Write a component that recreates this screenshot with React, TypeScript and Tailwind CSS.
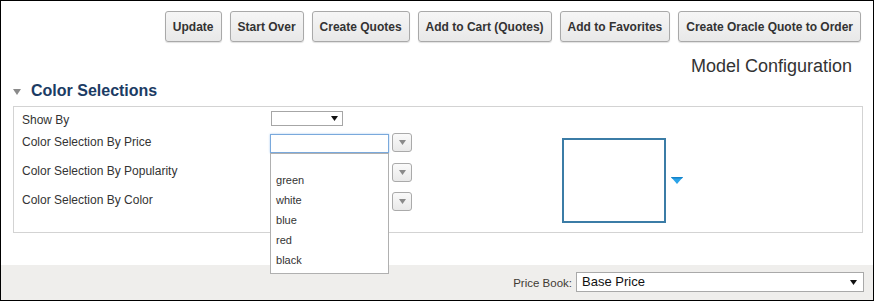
import React from 'react';

function Caret({ className }: { className?: string }) {
  return (
    <svg width="7" height="5" viewBox="0 0 7 5" className={className}>
      <path d="M0 0h7L3.5 5z" fill="currentColor" />
    </svg>
  );
}

function ToolButton({ label }: { label: string }) {
  return (
    <button className="h-[31px] px-[7px] rounded-[3px] border border-[#a9a9a9] bg-gradient-to-b from-[#f6f6f6] to-[#e8e8e8] text-[12px] font-bold text-[#333] shadow-[0_1px_1px_rgba(0,0,0,0.12)] whitespace-nowrap">
      {label}
    </button>
  );
}

function PickButton() {
  return (
    <div className="w-[20px] h-[19px] ml-[3px] mt-[1px] rounded-[3px] border border-[#aaa] bg-gradient-to-b from-[#fafafa] to-[#e9e9e9] flex items-center justify-center">
      <Caret className="text-[#8a8a8a]" />
    </div>
  );
}

const colors = ['green', 'white', 'blue', 'red', 'black'];

export default function App() {
  return (
    <div className="w-[874px] h-[301px] border border-black bg-white flex flex-col overflow-hidden font-['Liberation_Sans',Arial,sans-serif] text-[#333]">
      {/* toolbar */}
      <div className="flex justify-end gap-[8px] pt-[10px] pr-[12px]">
        <ToolButton label="Update" />
        <ToolButton label="Start Over" />
        <ToolButton label="Create Quotes" />
        <ToolButton label="Add to Cart (Quotes)" />
        <ToolButton label="Add to Favorites" />
        <ToolButton label="Create Oracle Quote to Order" />
      </div>

      <div className="mt-[14px] pr-[21px] text-right text-[18px] leading-[20px] text-[#333]">Model Configuration</div>

      {/* section header */}
      <div className="mt-[5px] pl-[12px] flex items-center h-[20px]">
        <svg width="8" height="6" viewBox="0 0 8 6" className="mt-[2px]">
          <path d="M0 0h8L4 6z" fill="#8a8a8a" />
        </svg>
        <span className="ml-[10px] text-[16px] font-bold text-[#1b3b64]">Color Selections</span>
      </div>

      {/* panel */}
      <div className="mt-[5px] ml-[12px] mr-[10px] h-[127px] border border-[#d3d3d3] flex text-[12px]">
        <div className="w-[398px] pl-[8px] flex flex-col pt-[2px]">
          <div className="h-[23px] flex items-start">
            <div className="w-[249px] mt-[3px] leading-[16px]">Show By</div>
            <div className="mt-[2px] w-[72px] h-[15px] border border-[#a6a6a6] bg-white flex items-center justify-end pr-[4px]">
              <Caret className="text-[#111]" />
            </div>
          </div>
          <div className="h-[30px] flex items-start">
            <div className="w-[249px] mt-[2px] leading-[16px]">Color Selection By Price</div>
            <div className="relative mt-[2px]">
              <div className="w-[119px] h-[19px] border border-[#7aa9dc] bg-white shadow-[0_0_2px_#a9c9ee]" />
              <div className="absolute z-10 left-0 top-[19px] w-[119px] h-[121px] border border-[#b0b0b0] bg-white text-[11px] text-[#333]">
                <div className="h-[16px]" />
                {colors.map((c) => (
                  <div key={c} className="h-[20px] leading-[20px] pl-[5px]">
                    {c}
                  </div>
                ))}
              </div>
            </div>
            <PickButton />
          </div>
          <div className="h-[29px] flex items-start">
            <div className="w-[249px] mt-[1px] leading-[16px]">Color Selection By Popularity</div>
            <div className="w-[119px]" />
            <PickButton />
          </div>
          <div className="flex items-start">
            <div className="w-[249px] mt-[1px] leading-[16px]">Color Selection By Color</div>
            <div className="w-[119px]" />
            <PickButton />
          </div>
        </div>

        <div className="ml-[150px] mt-[31px] w-[104px] h-[85px] border-2 border-[#3b7ca6] bg-white" />
        <svg width="12" height="7" viewBox="0 0 12 7" className="ml-[5px] mt-[70px]">
          <path d="M0 0h12L6 7z" fill="#2ba3e8" />
          <path d="M0 0h12l-1 1.5H1z" fill="#1583c9" />
        </svg>
      </div>

      {/* footer */}
      <div className="mt-auto h-[35px] bg-[#efeeec] flex justify-end items-start pt-[7px] pr-[9px]">
        <span className="mt-[4px] mr-[4px] text-[11.5px] leading-[14px] text-[#3f3a34]">Price Book:</span>
        <div className="w-[288px] h-[20px] border border-[#a9a9a9] bg-white flex items-center justify-between pl-[5px] pr-[6px]">
          <span className="text-[13px] text-[#111]">Base Price</span>
          <Caret className="text-[#111]" />
        </div>
      </div>
    </div>
  );
}
